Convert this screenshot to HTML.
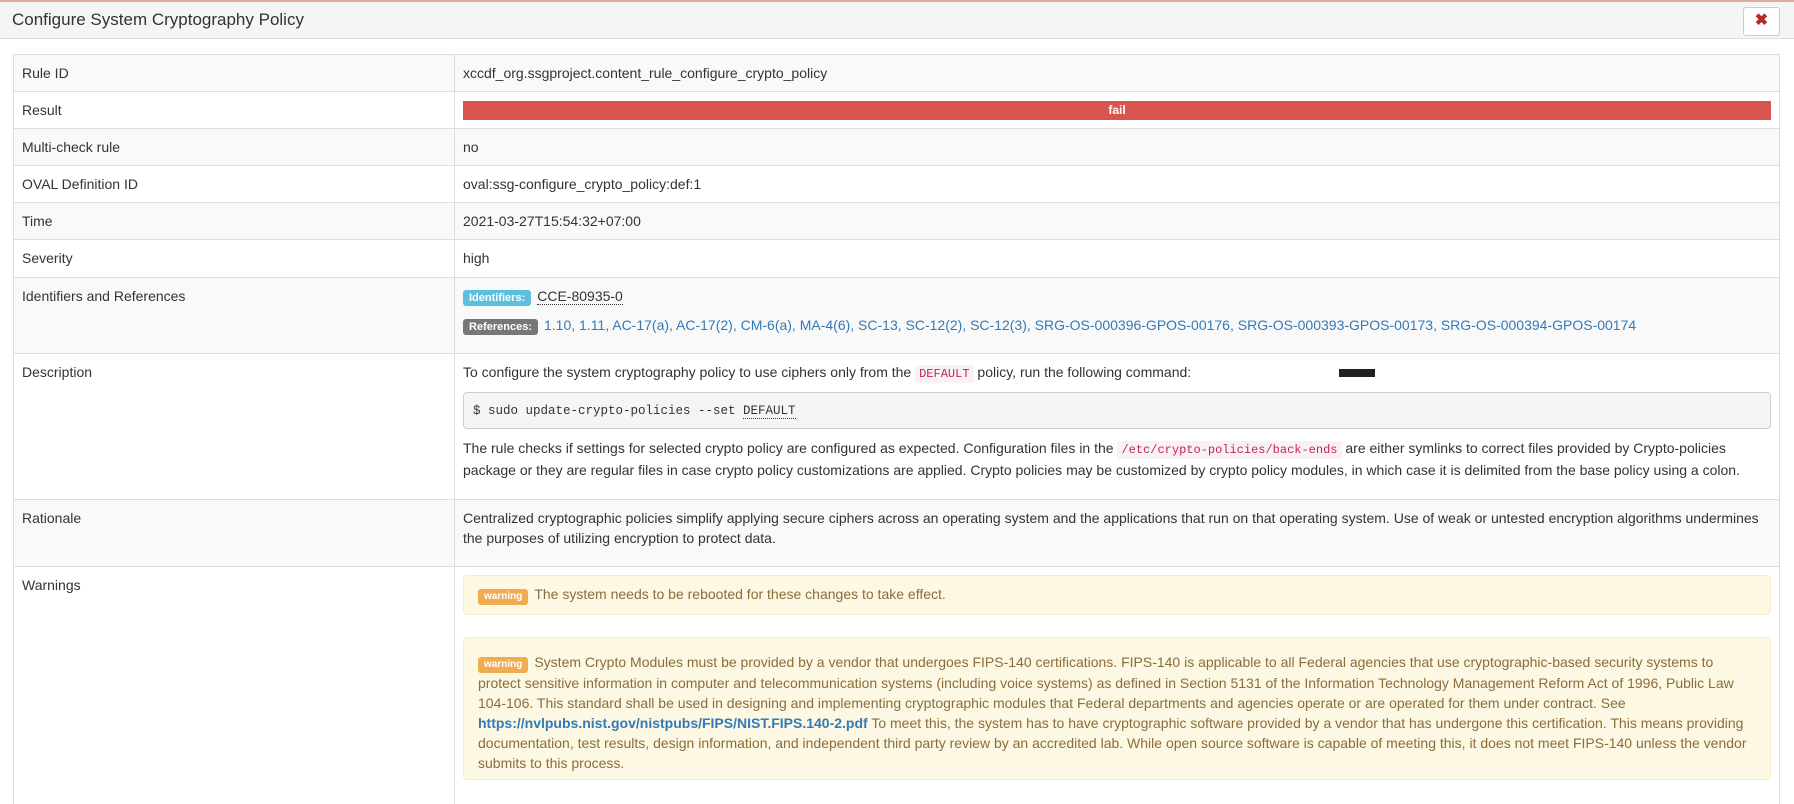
<!DOCTYPE html>
<html style="height:804px;overflow:hidden"><head><meta charset="utf-8"><style>
*{box-sizing:border-box}
body{margin:0;width:1794px;height:804px;overflow:hidden;position:relative;background:#fff;font-family:"Liberation Sans",Arial,sans-serif;font-size:14px;line-height:20px;color:#333}
.hdr{position:absolute;left:0;top:0;width:1794px;height:39px;background:#f5f5f5;border-top:2px solid #e0a9a0;border-bottom:1px solid #ddd}
.hdr .t{position:absolute;left:12px;top:8px;font-size:17px;color:#333}
.cl{position:absolute;left:1743px;top:5px;width:37px;height:29px;background:#fff;border:1px solid #ccc;border-radius:3px;color:#b52b27;font-weight:bold;font-size:16px;text-align:center;line-height:26px}
table{position:absolute;left:13px;top:54px;width:1767px;border-collapse:collapse;table-layout:fixed}
td{border:1px solid #ddd;padding:8px;vertical-align:top}
tr:nth-child(odd) td{background:#f9f9f9}
td.l{width:441px}
.fail{background:#d9534f;color:#fff;font-weight:bold;text-align:center;font-size:12px;line-height:19px;height:19px}
.lbl{display:inline-block;color:#fff;font-weight:bold;font-size:11px;line-height:14px;padding:1px 6px;border-radius:3px;margin-right:6px}
a{color:#337ab7;text-decoration:none}
code{font-family:"Liberation Mono",monospace;font-size:12px;color:#c7254e;background:#f9f2f4;padding:2px 4px;border-radius:3px}
pre{margin:8px 0 9px;background:#f5f5f5;border:1px solid #ccc;border-radius:4px;padding:9px;font-family:"Liberation Mono",monospace;font-size:12.5px;line-height:18px;height:37px}
.al{background:#fcf8e3;border:1px solid #faebcc;color:#8a6d3b;border-radius:4px;padding:14px;margin:0 0 20px}
.lw{background:#f0ad4e;font-size:10px}
</style></head><body>
<div class="hdr"><div class="t">Configure System Cryptography Policy</div><div class="cl">✖</div></div>
<table>
<tr style="height:37px"><td class="l">Rule ID</td><td>xccdf_org.ssgproject.content_rule_configure_crypto_policy</td></tr>
<tr style="height:37px"><td class="l">Result</td><td style="padding-top:9px"><div class="fail">fail</div></td></tr>
<tr style="height:37px"><td class="l">Multi-check rule</td><td>no</td></tr>
<tr style="height:37px"><td class="l">OVAL Definition ID</td><td>oval:ssg-configure_crypto_policy:def:1</td></tr>
<tr style="height:37px"><td class="l">Time</td><td>2021-03-27T15:54:32+07:00</td></tr>
<tr style="height:38px"><td class="l">Severity</td><td>high</td></tr>
<tr style="height:76px"><td class="l">Identifiers and References</td><td><div style="height:29px"><span class="lbl" style="background:#5bc0de">Identifiers:</span><span style="border-bottom:1px dotted #333">CCE-80935-0</span></div><div><span class="lbl" style="background:#777">References:</span><a>1.10, 1.11, AC-17(a), AC-17(2), CM-6(a), MA-4(6), SC-13, SC-12(2), SC-12(3), SRG-OS-000396-GPOS-00176, SRG-OS-000393-GPOS-00173, SRG-OS-000394-GPOS-00174</a></div></td></tr>
<tr style="height:146px"><td class="l">Description</td><td>To configure the system cryptography policy to use ciphers only from the <code>DEFAULT</code> policy, run the following command:<span style="display:inline-block;width:36px;height:8px;background:#222;margin-left:148px;vertical-align:middle"></span>
<pre>$ sudo update-crypto-policies --set <span style="border-bottom:1px dotted #333">DEFAULT</span></pre>
The rule checks if settings for selected crypto policy are configured as expected. Configuration files in the <code>/etc/crypto-policies/back-ends</code> are either symlinks to correct files provided by Crypto-policies package or they are regular files in case crypto policy customizations are applied. Crypto policies may be customized by crypto policy modules, in which case it is delimited from the base policy using a colon.</td></tr>
<tr style="height:67px"><td class="l">Rationale</td><td>Centralized cryptographic policies simplify applying secure ciphers across an operating system and the applications that run on that operating system. Use of weak or untested encryption algorithms undermines the purposes of utilizing encryption to protect data.</td></tr>
<tr style="height:300px"><td class="l">Warnings</td><td>
<div class="al" style="margin-top:0;padding:8px 14px;height:40px;margin-bottom:22px"><span class="lbl lw">warning</span>The system needs to be rebooted for these changes to take effect.</div>
<div class="al" style="height:143px"><span class="lbl lw">warning</span>System Crypto Modules must be provided by a vendor that undergoes FIPS-140 certifications. FIPS-140 is applicable to all Federal agencies that use cryptographic-based security systems to protect sensitive information in computer and telecommunication systems (including voice systems) as defined in Section 5131 of the Information Technology Management Reform Act of 1996, Public Law 104-106. This standard shall be used in designing and implementing cryptographic modules that Federal departments and agencies operate or are operated for them under contract. See <a style="font-weight:bold">https://nvlpubs.nist.gov/nistpubs/FIPS/NIST.FIPS.140-2.pdf</a> To meet this, the system has to have cryptographic software provided by a vendor that has undergone this certification. This means providing documentation, test results, design information, and independent third party review by an accredited lab. While open source software is capable of meeting this, it does not meet FIPS-140 unless the vendor submits to this process.</div>
</td></tr>
</table>
</body></html>
